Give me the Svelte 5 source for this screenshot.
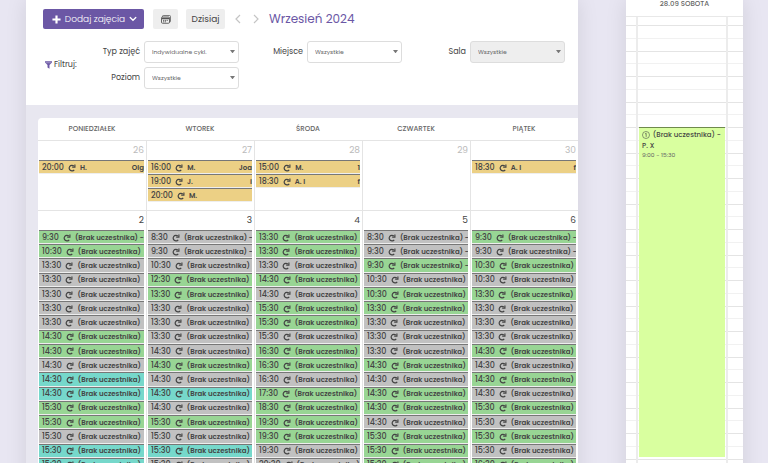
<script>
	const days = ['Poniedziałek', 'Wtorek', 'Środa', 'Czwartek', 'Piątek'];

	const previous = [
		{ day: 26, events: [{ time: '20:00', name: 'H.', rest: 'Olg' }] },
		{
			day: 27,
			events: [
				{ time: '16:00', name: 'M.', rest: 'Joa' },
				{ time: '19:00', name: 'J.', rest: 'i' },
				{ time: '20:00', name: 'M.', rest: '' }
			]
		},
		{
			day: 28,
			events: [
				{ time: '15:00', name: 'M.', rest: '1' },
				{ time: '18:30', name: 'A. I', rest: 'f' }
			]
		},
		{ day: 29, events: [] },
		{ day: 30, events: [{ time: '18:30', name: 'A. I', rest: 'f' }] }
	];

	// last letter is the status: g - green, a - gray, t - teal
	const current = [
		{ day: 2, slots: '9:30g 10:30g 13:30a 13:30a 13:30a 13:30a 13:30a 14:30g 14:30g 14:30a 14:30t 14:30t 15:30g 15:30g 15:30a 15:30t 15:30t' },
		{ day: 3, slots: '8:30a 9:30a 10:30a 12:30g 13:30g 13:30a 13:30a 13:30a 14:30a 14:30g 14:30a 14:30t 14:30a 15:30g 15:30a 15:30t 15:30a' },
		{ day: 4, slots: '13:30g 13:30g 13:30a 14:30g 14:30a 15:30g 15:30g 15:30a 16:30g 16:30g 16:30a 17:30g 18:30g 19:30g 19:30g 19:30a 20:30a' },
		{ day: 5, slots: '8:30a 9:30a 9:30g 10:30a 10:30g 13:30g 13:30a 13:30a 13:30a 14:30g 14:30a 14:30g 14:30g 14:30a 15:30g 15:30g 15:30g' },
		{ day: 6, slots: '9:30g 9:30a 10:30g 10:30a 13:30g 13:30a 13:30a 13:30a 14:30g 14:30a 14:30g 14:30a 15:30g 15:30a 15:30g 15:30a 16:30g' }
	].map((d) => ({
		day: d.day,
		events: d.slots.split(' ').map((s) => ({ time: s.slice(0, -1), status: s.slice(-1) }))
	}));

	const halfHours = Array.from({ length: 36 }, (_, i) => i);
</script>

{#snippet repeatIcon()}
	<svg class="repeat" viewBox="0 0 16 16" aria-hidden="true">
		<path d="M12.4 11.6A5.6 5.6 0 1 1 11.6 4" fill="none" stroke="currentColor" stroke-width="2.4" />
		<path d="M15 1v6.6H8.4V5.2h4.2V1z" fill="currentColor" />
	</svg>
{/snippet}

{#snippet picker(id, label, value, disabled)}
	<div class="field">
		<label for={id}>{label}</label>
		<div class="select">
			<select {id} {disabled}>
				<option>{value}</option>
			</select>
			<svg viewBox="0 0 6 4" aria-hidden="true"><path d="M0 0h6L3 4z" fill="#777" /></svg>
		</div>
	</div>
{/snippet}

<div class="page">
	<main class="panel">
		<header>
			<div class="toolbar">
				<button class="add">
					<svg class="plus" viewBox="0 0 10 10" aria-hidden="true"><path d="M5 .5v9M.5 5h9" stroke="#fff" stroke-width="2.4" /></svg>
					<span>Dodaj zajęcia</span>
					<svg class="caret" viewBox="0 0 8 6" aria-hidden="true"><path d="M1.2 1.5 4 4.3l2.8-2.8" fill="none" stroke="#fff" stroke-width="1.3" stroke-linecap="round" /></svg>
				</button>
				<button class="plain" aria-label="Kalendarz">
					<svg class="calendar" viewBox="0 0 20 18" aria-hidden="true">
						<rect x="1" y="4" width="16" height="12.5" rx="2" fill="none" stroke="#555" stroke-width="1.8" />
						<path d="M3 4V2.5Q3 1 4.5 1H17q2 0 2 2v9.5q0 1.5-1.5 1.5" fill="none" stroke="#555" stroke-width="1.5" />
						<path d="M2 7h14" stroke="#555" stroke-width="3" />
						<path d="M4 10.8h10M4 13.6h7" stroke="#555" stroke-width="1.8" stroke-dasharray="2.4 1.2" />
					</svg>
				</button>
				<button class="plain today">Dzisiaj</button>
				<nav>
					<button class="arrow" aria-label="Poprzedni"><svg viewBox="0 0 6 10" aria-hidden="true"><path d="M5 1 1 5l4 4" /></svg></button>
					<button class="arrow" aria-label="Następny"><svg viewBox="0 0 6 10" aria-hidden="true"><path d="m1 1 4 4-4 4" /></svg></button>
				</nav>
				<h1>Wrzesień 2024</h1>
			</div>
			<div class="filters">
				<div class="filter-title">
					<svg viewBox="0 0 12 14" aria-hidden="true"><path d="M0 .5h12v2.2L7.7 7v6.5L4.3 11V7L0 2.7z" fill="#6b57a5" /><path d="M1 3h10" stroke="#fff" stroke-width=".6" /></svg>
					Filtruj:
				</div>
				<div class="groups">
					{@render picker('type', 'Typ zajęć', 'Indywidualne cykl.', false)}
					{@render picker('place', 'Miejsce', 'Wszystkie', false)}
					{@render picker('room', 'Sala', 'Wszystkie', true)}
					{@render picker('level', 'Poziom', 'Wszystkie', false)}
				</div>
			</div>
		</header>

		<section class="month">
			<div class="row names">
				{#each days as day}
					<div class="name">{day}</div>
				{/each}
			</div>
			<div class="row week past">
				{#each previous as cell}
					<div class="cell">
						<div class="number">{cell.day}</div>
						<div class="events">
							{#each cell.events as event}
								<div class="event yellow">
									<span class="start">{event.time}</span>
									{@render repeatIcon()}
									<span>{event.name}</span>
									<span class="rest">{event.rest}</span>
								</div>
							{/each}
						</div>
					</div>
				{/each}
			</div>
			<div class="row week">
				{#each current as cell}
					<div class="cell">
						<div class="number">{cell.day}</div>
						<div class="events full">
							{#each cell.events as event}
								<div class="event" class:green={event.status === 'g'} class:teal={event.status === 't'}>
									<span class="start">{event.time}</span>
									{@render repeatIcon()}
									<span>(Brak uczestnika){event.time.length < 5 ? ' -' : ''}</span>
								</div>
							{/each}
						</div>
					</div>
				{/each}
			</div>
		</section>
	</main>

	<aside class="panel day">
		<h2>28.09 sobota</h2>
		<div class="hours">
			{#each halfHours as half}
				<div class="half" class:light={half % 2} style="grid-row: {half + 1}"></div>
			{/each}
			<div class="lane"></div>
			<div class="lesson">
				<div class="title">
					<svg viewBox="0 0 10 10" aria-hidden="true"><circle cx="5" cy="5" r="4.4" fill="none" stroke="currentColor" stroke-width=".7" /><path d="M3.8 3.8 5.2 2.8v4.6" fill="none" stroke="currentColor" stroke-width=".8" /></svg>
					(Brak uczestnika) - P. X
				</div>
				<div class="time">9:00 - 15:30</div>
			</div>
		</div>
	</aside>
</div>

<style>
	:global(body) {
		background: #e8e6f2;
	}
	.page {
		display: grid;
		grid-template-columns: minmax(0, 1fr) 117px;
		gap: 48px;
		height: 100vh;
		padding: 0 25px 0 26px;
		box-sizing: border-box;
		overflow: hidden;
		font-family: Poppins, Inter, 'Liberation Sans', sans-serif;
		color: #444;
	}
	.panel {
		box-shadow: 0 0 20px rgba(0, 0, 0, 0.1);
	}
	main {
		background: #e8e7f0;
	}
	header {
		height: 105px;
		padding: 9px 13px 0 17px;
		box-sizing: border-box;
		background: #fff;
	}
	button,
	select {
		font-family: inherit;
		margin: 0;
	}
	button {
		display: flex;
		align-items: center;
		justify-content: center;
		height: 20px;
		padding: 0;
		border: none;
		border-radius: 2px;
		font-size: 9px;
		cursor: pointer;
	}
	.toolbar {
		display: flex;
		align-items: center;
	}
	.add {
		justify-content: space-between;
		width: 101px;
		margin-right: 9px;
		padding: 0 7px 0 9px;
		background: #6b57a5;
		color: #fff;
		font-weight: 300;
		white-space: nowrap;
	}
	.plus {
		width: 9px;
	}
	.caret {
		width: 8px;
	}
	.plain {
		width: 25px;
		margin-right: 8px;
		background: #eee;
		color: #444;
	}
	.today {
		width: 39px;
	}
	.calendar {
		width: 10px;
	}
	nav {
		display: flex;
		gap: 12px;
		margin-left: 2px;
	}
	.arrow {
		background: none;
	}
	.arrow svg {
		width: 6px;
		height: 10px;
		fill: none;
		stroke: #c4c4c4;
		stroke-width: 1.2;
	}
	h1 {
		margin: 0 0 0 10px;
		font-size: 12px;
		font-weight: 400;
		line-height: 20px;
		color: #6b57a5;
	}
	.filters {
		display: flex;
		align-items: center;
		margin-top: 12px;
		padding-left: 2px;
	}
	.filter-title {
		display: flex;
		align-items: center;
		gap: 2px;
		width: 31px;
		font-size: 8px;
		white-space: nowrap;
	}
	.filter-title svg {
		flex: none;
		width: 7px;
	}
	.groups {
		flex: 1;
		display: grid;
		grid-template-columns: repeat(3, 1fr);
		gap: 4px 0;
	}
	.field {
		display: flex;
		align-items: center;
		justify-content: flex-end;
		gap: 4px;
		font-size: 8px;
	}
	.select {
		position: relative;
	}
	select {
		display: block;
		width: 95px;
		height: 22px;
		padding: 0 16px 0 7px;
		border: 1px solid #ddd;
		border-radius: 3px;
		background: #fff;
		color: #666;
		font-size: 6px;
		appearance: none;
	}
	select:disabled {
		background: #eee;
		opacity: 1;
	}
	.select svg {
		position: absolute;
		top: 9px;
		right: 4px;
		width: 5px;
		pointer-events: none;
	}
	.month {
		margin: 13px 0 0 12px;
		border-top-left-radius: 4px;
		background: #fff;
		overflow: hidden;
	}
	.row {
		display: grid;
		grid-template-columns: repeat(5, minmax(0, 1fr));
	}
	.name {
		font-size: 7px;
		font-weight: 500;
		line-height: 22px;
		text-align: center;
		text-transform: uppercase;
		color: #666;
	}
	.week {
		min-height: 70px;
		border-top: 1px solid #e4e4e4;
		box-sizing: border-box;
	}
	.cell {
		padding: 0 2px 0 1px;
		border-left: 1px solid #e4e4e4;
		min-width: 0;
	}
	.cell:first-child {
		border-left: none;
	}
	.number {
		padding-bottom: 1px;
		font-size: 9px;
		line-height: 18px;
		text-align: right;
		color: #444;
	}
	.past .number {
		color: #bbb;
	}
	.events {
		display: grid;
		grid-auto-rows: 14px;
	}
	.events.full {
		grid-auto-rows: 1fr;
		height: 242px;
	}
	.event {
		display: flex;
		align-items: center;
		gap: 4px;
		min-height: 0;
		padding: 1px 0 0 3px;
		box-sizing: border-box;
		border-top: 1px solid #777;
		border-bottom: 1px solid #eee;
		background: #c1c1c1;
		color: #444;
		font-size: 7px;
		font-weight: 600;
		line-height: 12px;
		white-space: nowrap;
		overflow: hidden;
	}
	.start {
		font-size: 8px;
		font-weight: 500;
	}
	.green {
		background: #98d594;
	}
	.teal {
		background: #76d8cb;
	}
	.yellow {
		background: #ecd085;
	}
	.rest {
		margin-left: auto;
	}
	.repeat {
		flex: none;
		width: 8px;
		height: 8px;
	}
	.day {
		background: #fff;
	}
	h2 {
		height: 17px;
		margin: 0;
		border-bottom: 1px solid #e8e8e8;
		box-sizing: border-box;
		font-size: 7px;
		font-weight: 500;
		line-height: 7px;
		text-align: center;
		text-transform: uppercase;
		color: #666;
	}
	.hours {
		display: grid;
		grid-template-columns: 10px 1fr 15px;
		grid-template-rows: repeat(36, 1fr);
		height: 459px;
		padding-top: 8px;
	}
	.half {
		grid-column: 1 / -1;
		border-top: 1px solid #e4e4e4;
	}
	.light {
		border-top-color: #f1f1f1;
	}
	.lane {
		grid-column: 2;
		grid-row: 1 / -1;
		margin-top: -8px;
		border: solid #ececec;
		border-width: 0 2px;
	}
	.lesson {
		grid-column: 2;
		grid-row: 9 / 35;
		margin: 0 3px 2px;
		padding: 1px 3px;
		border-top: 1px solid #6f8a4c;
		background: #d9ff9f;
		color: #444;
	}
	.title {
		font-size: 7px;
		font-weight: 500;
		line-height: 11px;
	}
	.title svg {
		width: 8px;
		height: 8px;
		margin-right: 1px;
		vertical-align: -2px;
	}
	.time {
		font-size: 6px;
		line-height: 9px;
		color: #666;
	}
</style>
